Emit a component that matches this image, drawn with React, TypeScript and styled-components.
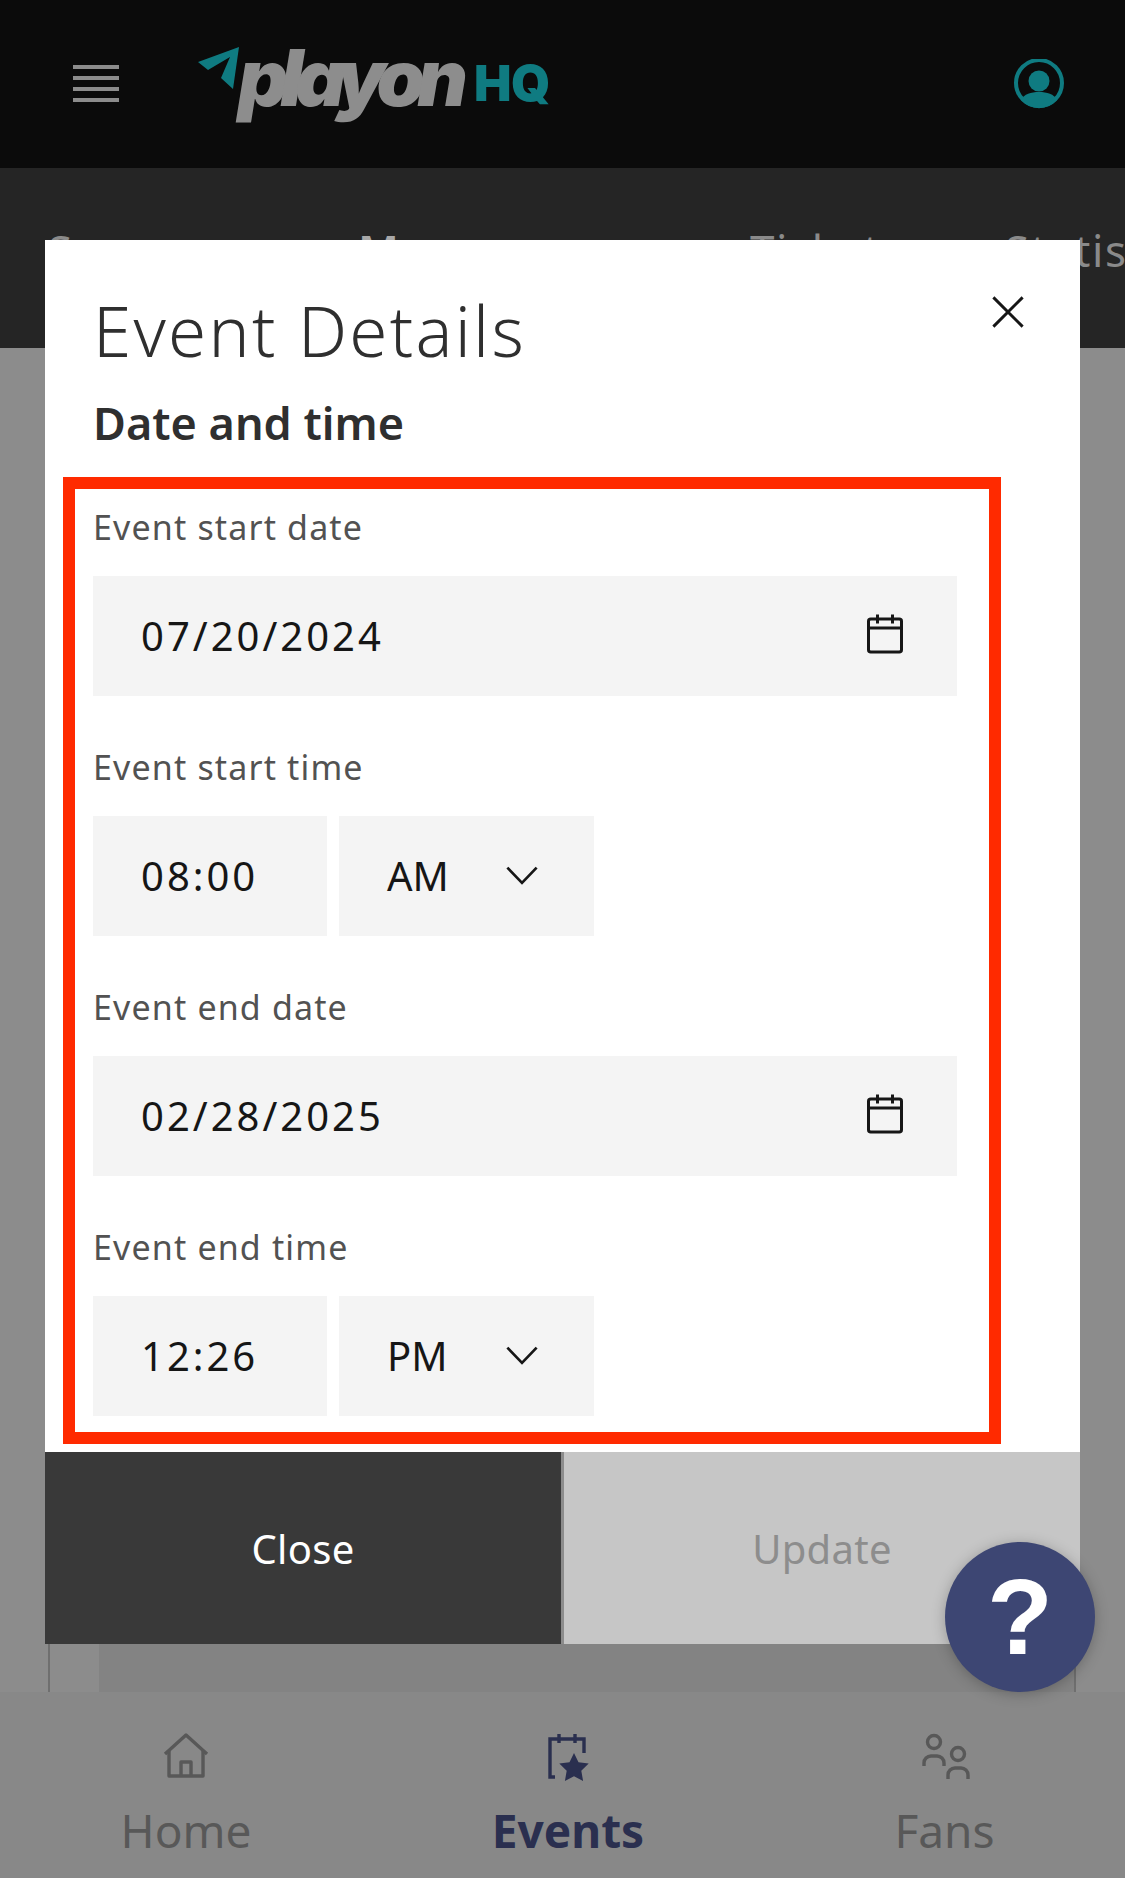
import React from "react";
import styled, { createGlobalStyle } from "styled-components";

const FONT = `"Noto Sans", "Open Sans", "Liberation Sans", sans-serif`;

const Global = createGlobalStyle`
  html, body { margin: 0; padding: 0; background: #8c8c8c; }
  * { box-sizing: border-box; }
  body { font-family: ${FONT}; }
`;

const Page = styled.div`
  position: relative;
  width: 1125px;
  height: 1878px;
  overflow: hidden;
  display: flex;
  flex-direction: column;
  background: #8c8c8c;
`;

const TopBar = styled.header`
  height: 168px;
  flex: none;
  background: #0b0b0b;
  display: flex;
  align-items: center;
  padding: 0 60px 0 73px;
`;

const Menu = styled.svg`
  width: 46px;
  height: 38px;
  flex: none;
  margin-right: 79px;
`;

const Logo = styled.div`
  display: flex;
  align-items: center;
  height: 120px;
  flex: 1;
`;

const LogoMark = styled.svg`
  width: 42px;
  height: 46px;
  flex: none;
  margin: -30px 0 0 0;
`;

const LogoWord = styled.span`
  font-family: "Inter", "Liberation Sans", sans-serif;
  font-weight: 900;
  font-style: italic;
  font-size: 78px;
  letter-spacing: -8px;
  line-height: 1;
  color: #8d8d8d;
  margin: -12px 14px 0 -2px;
`;

const LogoHQ = styled.span`
  font-family: "Inter", "Liberation Sans", sans-serif;
  font-weight: 900;
  font-size: 50px;
  letter-spacing: -0.5px;
  line-height: 1;
  color: #0f7b81;
  margin-top: -2px;
`;

const Avatar = styled.svg`
  width: 52px;
  height: 50px;
  flex: none;
`;

const TabBar = styled.nav`
  height: 180px;
  flex: none;
  background: #252525;
  display: flex;
  padding: 52px 0 0 48px;
  white-space: nowrap;
  overflow: hidden;
`;

const Tab = styled.span<{ $w: number; $active?: boolean }>`
  width: ${(p) => p.$w}px;
  flex: none;
  font-size: 44px;
  line-height: 60px;
  letter-spacing: 1.6px;
  font-weight: ${(p) => (p.$active ? 600 : 400)};
  color: ${(p) => (p.$active ? "#a8a8a8" : "#8a8a8a")};
`;

const Content = styled.main`
  flex: 1;
  display: flex;
  align-items: flex-end;
  padding: 0 49px 0 48px;
`;

const Table = styled.div`
  flex: 1;
  height: 60px;
  border-left: 2px solid #6f6f6f;
  border-right: 2px solid #6f6f6f;
  padding-left: 49px;
  display: flex;
`;

const TableFill = styled.div`
  flex: 1;
  background: #838383;
`;

const BottomNav = styled.nav`
  height: 186px;
  flex: none;
  background: #888888;
  display: grid;
  grid-template-columns: 372px 392px 1fr;
`;

const NavItem = styled.div<{ $active?: boolean }>`
  display: flex;
  flex-direction: column;
  align-items: center;
  padding-top: 38px;
  color: ${(p) => (p.$active ? "#2a2f4f" : "#585858")};
  font-size: 46px;
  font-weight: ${(p) => (p.$active ? 700 : 400)};
`;

const NavIcon = styled.svg`
  width: 54px;
  height: 54px;
  flex: none;
`;

const NavLabel = styled.span`
  line-height: 60px;
  margin-top: 16px;
`;

const Modal = styled.section`
  position: absolute;
  left: 45px;
  top: 240px;
  width: 1035px;
  height: 1404px;
  background: #fff;
  display: flex;
  flex-direction: column;
`;

const ModalHead = styled.div`
  padding: 42px 48px 0 48px;
  height: 237px;
  flex: none;
  position: relative;
`;

const Title = styled.h2`
  margin: 0;
  font-size: 69px;
  line-height: 96px;
  letter-spacing: 2.3px;
  font-weight: 300;
  color: #2f2f2f;
`;

const Section = styled.h3`
  margin: 15px 0 0;
  font-size: 45px;
  line-height: 60px;
  font-weight: 600;
  color: #2f2f2f;
`;

const CloseIcon = styled.svg`
  position: absolute;
  right: 54px;
  top: 54px;
  width: 36px;
  height: 36px;
`;

const Highlight = styled.div`
  margin-left: 18px;
  width: 938px;
  height: 967px;
  border: 12px solid #ff2a00;
  padding: 11px 0 0 18px;
  flex: none;
`;

const FieldGroup = styled.div`
  height: 240px;
`;

const Label = styled.label`
  display: block;
  font-size: 34px;
  line-height: 54px;
  letter-spacing: 1.15px;
  color: #525252;
  margin-bottom: 22px;
`;

const Row = styled.div`
  display: flex;
  gap: 12px;
`;

const Input = styled.div<{ $w: number; $tight?: boolean }>`
  width: ${(p) => p.$w}px;
  height: 120px;
  background: #f4f4f4;
  display: flex;
  align-items: center;
  justify-content: space-between;
  padding: 0 48px 2px;
  font-size: 40px;
  letter-spacing: ${(p) => (p.$tight ? "0" : "3px")};
  color: #161616;
`;

const FieldIcon = styled.svg`
  width: 48px;
  height: 48px;
  flex: none;
  margin-top: -3px;
`;

const Chevron = styled.svg`
  width: 36px;
  height: 36px;
  flex: none;
  margin-right: 6px;
`;

const Footer = styled.div`
  margin-top: 8px;
  flex: 1;
  display: flex;
  gap: 3px;
  background: #8c8c8c;
`;

const FootBtn = styled.div<{ $primary?: boolean }>`
  flex: 1;
  display: flex;
  align-items: center;
  justify-content: center;
  font-size: 40px;
  letter-spacing: 0.3px;
  background: ${(p) => (p.$primary ? "#393939" : "#c6c6c6")};
  color: ${(p) => (p.$primary ? "#ffffff" : "#8d8d8d")};
`;

const Help = styled.button`
  position: absolute;
  left: 945px;
  top: 1542px;
  width: 150px;
  height: 150px;
  border: 0;
  padding: 0;
  border-radius: 50%;
  background: #3d4673;
  box-shadow: 0 2px 14px rgba(0, 0, 0, 0.25);
  color: #fff;
  font-family: "Liberation Sans", sans-serif;
  font-weight: 700;
  font-size: 108px;
  line-height: 150px;
`;

const Calendar = () => (
  <FieldIcon viewBox="0 0 32 32" fill="none" stroke="#161616" strokeWidth="2">
    <rect x="5" y="6" width="22" height="22" rx="1.5" />
    <path d="M5 12h22M11 3v6M21 3v6" />
  </FieldIcon>
);

const Down = () => (
  <Chevron viewBox="0 0 32 32" fill="none" stroke="#161616" strokeWidth="2.4">
    <path d="M3 9.5 16 23 29 9.5" />
  </Chevron>
);

export default function App() {
  return (
    <>
      <Global />
      <Page>
        <TopBar>
          <Menu viewBox="0 0 46 38" fill="#8c8c8c">
            <rect y="0" width="46" height="4" />
            <rect y="11" width="46" height="4" />
            <rect y="22" width="46" height="4" />
            <rect y="33" width="46" height="4" />
          </Menu>
          <Logo>
            <LogoMark viewBox="0 0 42 46">
              <path d="M0 16 41 1 35 43 23 32 32 11 10 24z" fill="#0f7b81" />
            </LogoMark>
            <LogoWord>playon</LogoWord>
            <LogoHQ>HQ</LogoHQ>
          </Logo>
          <Avatar viewBox="0 0 52 50">
            <circle cx="26" cy="24" r="23" fill="none" stroke="#0f7b81" strokeWidth="4" />
            <circle cx="26" cy="22" r="10.5" fill="#0f7b81" />
            <path d="M8 41c3-6 10-8 18-8s15 2 18 8a24 24 0 0 1-36 0z" fill="#0f7b81" />
          </Avatar>
        </TopBar>
        <TabBar>
          <Tab $w={310}>Summary</Tab>
          <Tab $w={392} $active>Manage</Tab>
          <Tab $w={255}>Tickets</Tab>
          <Tab $w={240}>Statistics</Tab>
        </TabBar>
        <Content>
          <Table>
            <TableFill />
          </Table>
        </Content>
        <BottomNav>
          <NavItem>
            <NavIcon viewBox="0 0 54 54" fill="none" stroke="#585858" strokeWidth="3.4" strokeLinejoin="round">
              <path d="M6 24 27 5l21 19" />
              <path d="M10 21v25h34V21" />
              <path d="M22 46V32h10v14" />
            </NavIcon>
            <NavLabel>Home</NavLabel>
          </NavItem>
          <NavItem $active>
            <NavIcon viewBox="0 0 54 54" fill="none" stroke="#2a2f4f" strokeWidth="3.4">
              <path d="M14 47H9V9h34v14M18 4v9M34 4v9" />
              <path d="M33 23l4.5 9.2 10.2 1.4-7.4 7.2 1.8 10.2-9.1-4.8-9.1 4.8 1.8-10.2-7.4-7.2 10.2-1.4z" fill="#2a2f4f" stroke="none" />
            </NavIcon>
            <NavLabel>Events</NavLabel>
          </NavItem>
          <NavItem>
            <NavIcon viewBox="0 0 54 54" fill="none" stroke="#585858" strokeWidth="3.4">
              <circle cx="16" cy="12" r="6.5" />
              <circle cx="40" cy="24" r="6.5" />
              <path d="M6 36v-3a7 7 0 0 1 7-7h6a7 7 0 0 1 7 7v3" />
              <path d="M30 49v-4a7 7 0 0 1 7-7h6a7 7 0 0 1 7 7v4" />
            </NavIcon>
            <NavLabel>Fans</NavLabel>
          </NavItem>
        </BottomNav>
        <Modal>
          <ModalHead>
            <Title>Event Details</Title>
            <Section>Date and time</Section>
            <CloseIcon viewBox="0 0 32 32" fill="none" stroke="#161616" strokeWidth="2.6">
              <path d="M3 3l26 26M29 3L3 29" />
            </CloseIcon>
          </ModalHead>
          <Highlight>
            <FieldGroup>
              <Label>Event start date</Label>
              <Input $w={864}>
                <span>07/20/2024</span>
                <Calendar />
              </Input>
            </FieldGroup>
            <FieldGroup>
              <Label>Event start time</Label>
              <Row>
                <Input $w={234}>08:00</Input>
                <Input $w={255} $tight>
                  <span>AM</span>
                  <Down />
                </Input>
              </Row>
            </FieldGroup>
            <FieldGroup>
              <Label>Event end date</Label>
              <Input $w={864}>
                <span>02/28/2025</span>
                <Calendar />
              </Input>
            </FieldGroup>
            <FieldGroup>
              <Label>Event end time</Label>
              <Row>
                <Input $w={234}>12:26</Input>
                <Input $w={255} $tight>
                  <span>PM</span>
                  <Down />
                </Input>
              </Row>
            </FieldGroup>
          </Highlight>
          <Footer>
            <FootBtn $primary>Close</FootBtn>
            <FootBtn>Update</FootBtn>
          </Footer>
        </Modal>
        <Help>?</Help>
      </Page>
    </>
  );
}
